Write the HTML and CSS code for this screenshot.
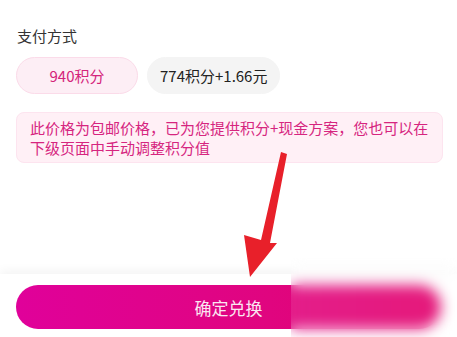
FILE: index.html
```html
<!DOCTYPE html>
<html lang="zh-CN">
<head>
<meta charset="utf-8">
<link rel="stylesheet" href="styles.css">
</head>
<body>
<div class="page">
  <main class="content">
    <h2 class="title">支付方式</h2>
    <div class="chips">
      <div class="chip chip-active">940积分</div>
      <div class="chip">774积分+1.66元</div>
    </div>
    <p class="notice">此价格为包邮价格，已为您提供积分+现金方案，您也可以在下级页面中手动调整积分值</p>
  </main>
  <footer class="bottom-bar">
    <button class="confirm">确定兑换</button>
  </footer>
  <svg class="arrow" width="457" height="337" viewBox="0 0 457 337">
    <polygon points="281,152 287,154 270,243 277,243 250,277 244,235 261,240" fill="#e8202a"/>
  </svg>
  <div class="blur-mask"></div>
</div>
</body>
</html>
```

FILE: styles.css
```css
* { box-sizing: border-box; }
html, body {
  margin: 0;
  padding: 0;
  background: #fff;
}
body {
  font-family: "Noto Sans CJK SC", "Noto Sans", sans-serif;
}
.page {
  position: relative;
  width: 457px;
  height: 337px;
  display: flex;
  flex-direction: column;
  overflow: hidden;
}
.content {
  flex: 1;
  padding: 25px 14px 0 16px;
}
.title {
  margin: 0;
  font-size: 15px;
  line-height: 22px;
  font-weight: 400;
  color: #333;
  padding-left: 1px;
}
.chips {
  display: flex;
  gap: 9px;
  margin-top: 10px;
}
.chip {
  height: 37px;
  min-width: 122px;
  padding: 0 12px;
  border-radius: 19px;
  background: #f4f4f4;
  color: #222;
  font-size: 15px;
  display: flex;
  align-items: center;
  justify-content: center;
  border: 1px solid #f4f4f4;
}
.chip-active {
  background: #fdeef5;
  border-color: #fbdbe9;
  color: #d4237a;
}
.notice {
  margin: 18px 0 0 0;
  padding: 5px 4px 4px 13px;
  background: #fff0f6;
  border: 1px solid #fde4ef;
  border-radius: 8px;
  color: #d6257f;
  font-size: 15px;
  line-height: 20px;
}
.bottom-bar {
  height: 63px;
  padding: 11px 16px 0 16px;
  background: #fff;
  box-shadow: 0 -3px 10px rgba(0, 0, 0, 0.05);
}
.confirm {
  width: 100%;
  height: 44px;
  border: none;
  border-radius: 22px;
  background: linear-gradient(90deg, #e0019a 0%, #e0057f 60%, #e2006c 100%);
  color: #fbe6f1;
  font-family: "Noto Sans CJK SC", "Noto Sans", sans-serif;
  font-size: 17px;
  padding: 0;
}
.arrow {
  position: absolute;
  left: 0;
  top: 0;
  pointer-events: none;
}
.blur-mask {
  position: absolute;
  left: 291px;
  top: 258px;
  width: 166px;
  height: 79px;
  backdrop-filter: blur(7px);
  -webkit-backdrop-filter: blur(7px);
  background: rgba(255, 255, 255, 0.1);
}
```
